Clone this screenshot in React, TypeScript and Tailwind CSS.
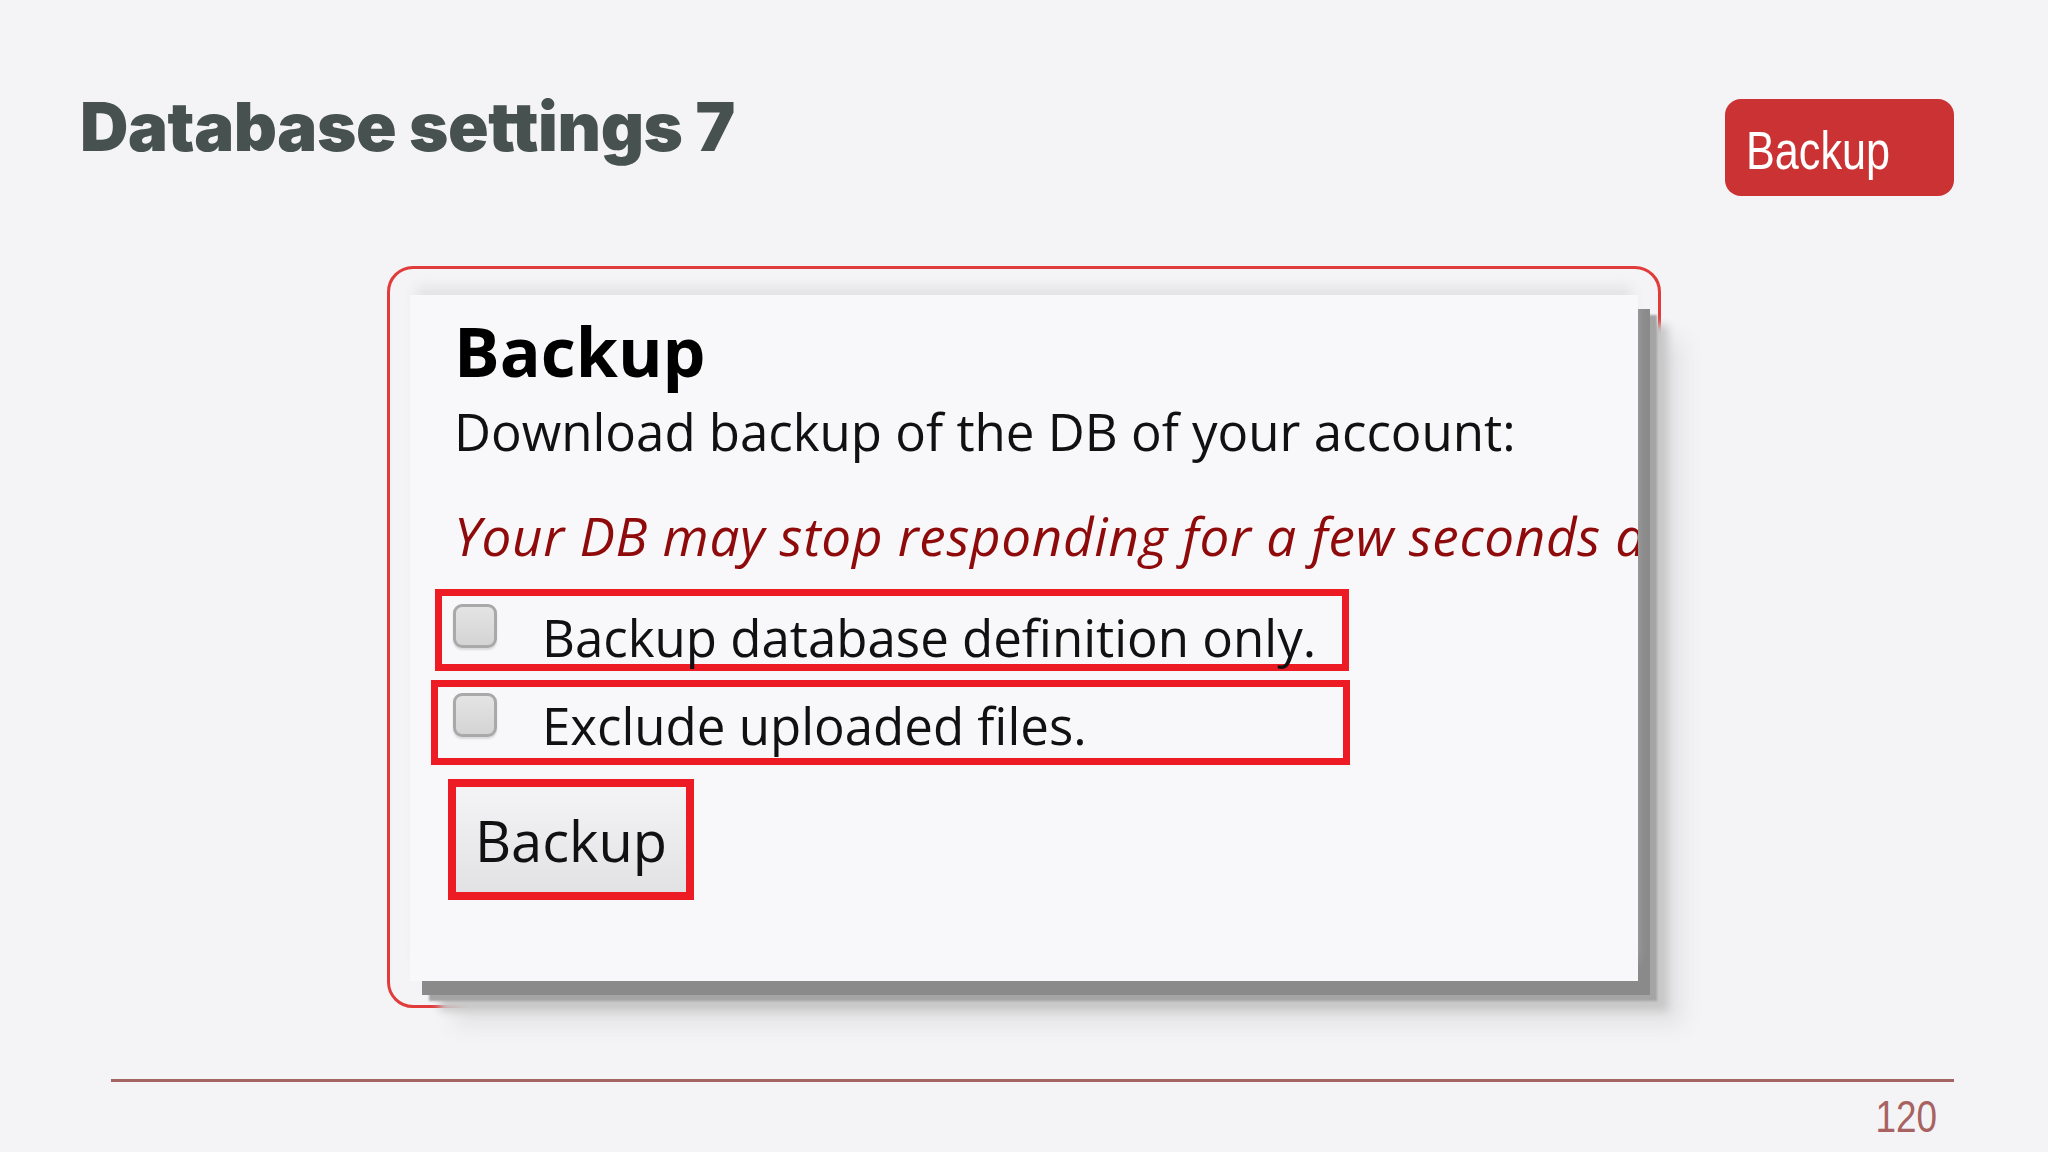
import React from 'react';

const Checkbox = () => (
  <div className="h-[44px] w-[44px] shrink-0 rounded-[9px] border-[3px] border-[#a9a9a9] bg-gradient-to-b from-[#e4e4e4] to-[#d4d4d4] shadow-[0_2px_2px_rgba(0,0,0,0.12)]" />
);

export default function App() {
  return (
    <div className="min-h-[1152px] w-full bg-[#f4f4f6] font-['Open_Sans',sans-serif]">
      {/* header */}
      <div className="flex items-start justify-between pl-[80px] pr-[94px] pt-[91px]">
        <h1 className="font-['Inter',sans-serif] text-[67px] font-black leading-[72px] tracking-[-0.4px] text-[#465150]">
          Database settings 7
        </h1>
        <div className="mt-[8px] flex h-[97px] w-[229px] items-center rounded-[16px] bg-[#cb3234] pl-[21px] pt-[4px] font-['Liberation_Sans',sans-serif] text-[54px] leading-none text-white">
          <span className="inline-block origin-left scale-x-[0.8]">Backup</span>
        </div>
      </div>

      {/* screenshot frame */}
      <div className="ml-[387px] mt-[70px] h-[742px] w-[1274px] rounded-[26px] border-[3px] border-[#e03c3c] pl-[20px] pt-[26px]">
        <div className="relative h-[686px] w-[1228px] bg-[#f8f8fa] shadow-[0_-14px_12px_-6px_#e2e2e4,12px_14px_0_#8a8a8a,19px_20px_2px_#a4a4a4,30px_30px_8px_#c8c8c8,44px_44px_20px_#e2e2e4]">
          <div className="h-full w-full overflow-hidden px-[44px] pt-[16px]">
            <div className="text-[68px] font-bold leading-[80px] text-black">Backup</div>
            <div className="mt-[10px] whitespace-nowrap text-[51px] leading-[60px] text-[#111]">
              Download backup of the DB of your account:
            </div>
            <div className="mt-[45px] whitespace-nowrap text-[53px] italic leading-[60px] tracking-[0.7px] text-[#8f0a0a]">
              Your DB may stop responding for a few seconds during backup.
            </div>

            <div className="-ml-[19px] mt-[23px] flex h-[82px] w-[914px] items-start border-[7px] border-[#ed1c24]">
              <div className="ml-[11px] mt-[8px]">
                <Checkbox />
              </div>
              <div className="ml-[45px] mt-[11px] whitespace-nowrap text-[51px] leading-[60px] text-[#111]">
                Backup database definition only.
              </div>
            </div>

            <div className="-ml-[23px] mt-[9px] flex h-[85px] w-[919px] items-start border-[7px] border-[#ed1c24]">
              <div className="ml-[15px] mt-[6px]">
                <Checkbox />
              </div>
              <div className="ml-[45px] mt-[8px] whitespace-nowrap text-[51px] leading-[60px] text-[#111]">
                Exclude uploaded files.
              </div>
            </div>

            <div className="-ml-[6px] mt-[14px] h-[121px] w-[246px] border-[8px] border-[#ed1c24]">
              <div className="flex h-full w-full items-center justify-center bg-gradient-to-b from-[#f4f4f6] to-[#e2e2e4] text-[56px] leading-none text-[#111]">
                Backup
              </div>
            </div>
          </div>
        </div>
      </div>

      {/* footer */}
      <div className="ml-[111px] mt-[71px] h-[3px] w-[1843px] bg-[#a46464]" />
      <div className="mr-[111px] mt-[13px] flex justify-end font-['Liberation_Sans',sans-serif] text-[45px] leading-[43px] text-[#a86262]">
        <span className="inline-block origin-right scale-x-[0.82]">120</span>
      </div>
    </div>
  );
}
